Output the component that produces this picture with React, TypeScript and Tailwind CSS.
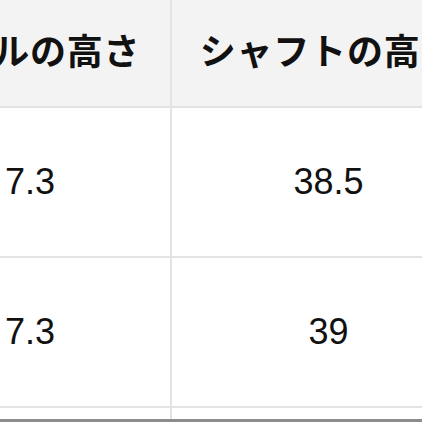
const rows = [
  ['7.3', '38.5'],
  ['7.3', '39'],
  ['', ''],
];

export default function App() {
  return (
    <div className="w-[422px] h-[422px] overflow-hidden bg-white flex flex-col">
      <div className="h-[419px] overflow-hidden">
        <div className="ml-[-110px] mt-[-8px] w-[700px]">
          {/* header */}
          <div className="flex bg-[#f3f3f3] border-b-2 border-[#e3e3e3]">
            <div
              className="w-[282px] h-[114px] border-r-2 border-[#e3e3e3] flex items-center justify-center text-[36px] font-bold tracking-[0.8px] text-[#111]"
              style={{ fontFamily: '"Noto Sans CJK JP", sans-serif' }}
            >
              ヒールの高さ
            </div>
            <div
              className="w-[315px] h-[114px] border-r-2 border-[#e3e3e3] flex items-center justify-center text-[36px] font-bold tracking-[0.8px] text-[#111] whitespace-nowrap"
              style={{ fontFamily: '"Noto Sans CJK JP", sans-serif' }}
            >
              シャフトの高さ
            </div>
          </div>
          {rows.map((r, i) => (
            <div key={i} className="flex border-b-2 border-[#e3e3e3]">
              <div className="w-[282px] h-[148px] border-r-2 border-[#e3e3e3] flex items-center justify-center text-[36px] text-[#111] font-['Liberation_Sans',sans-serif]">
                {r[0]}
              </div>
              <div className="w-[315px] h-[148px] border-r-2 border-[#e3e3e3] flex items-center justify-center text-[36px] text-[#111] font-['Liberation_Sans',sans-serif]">
                {r[1]}
              </div>
            </div>
          ))}
        </div>
      </div>
      <div className="h-[3px] bg-[#8c8c8c]" />
    </div>
  );
}
